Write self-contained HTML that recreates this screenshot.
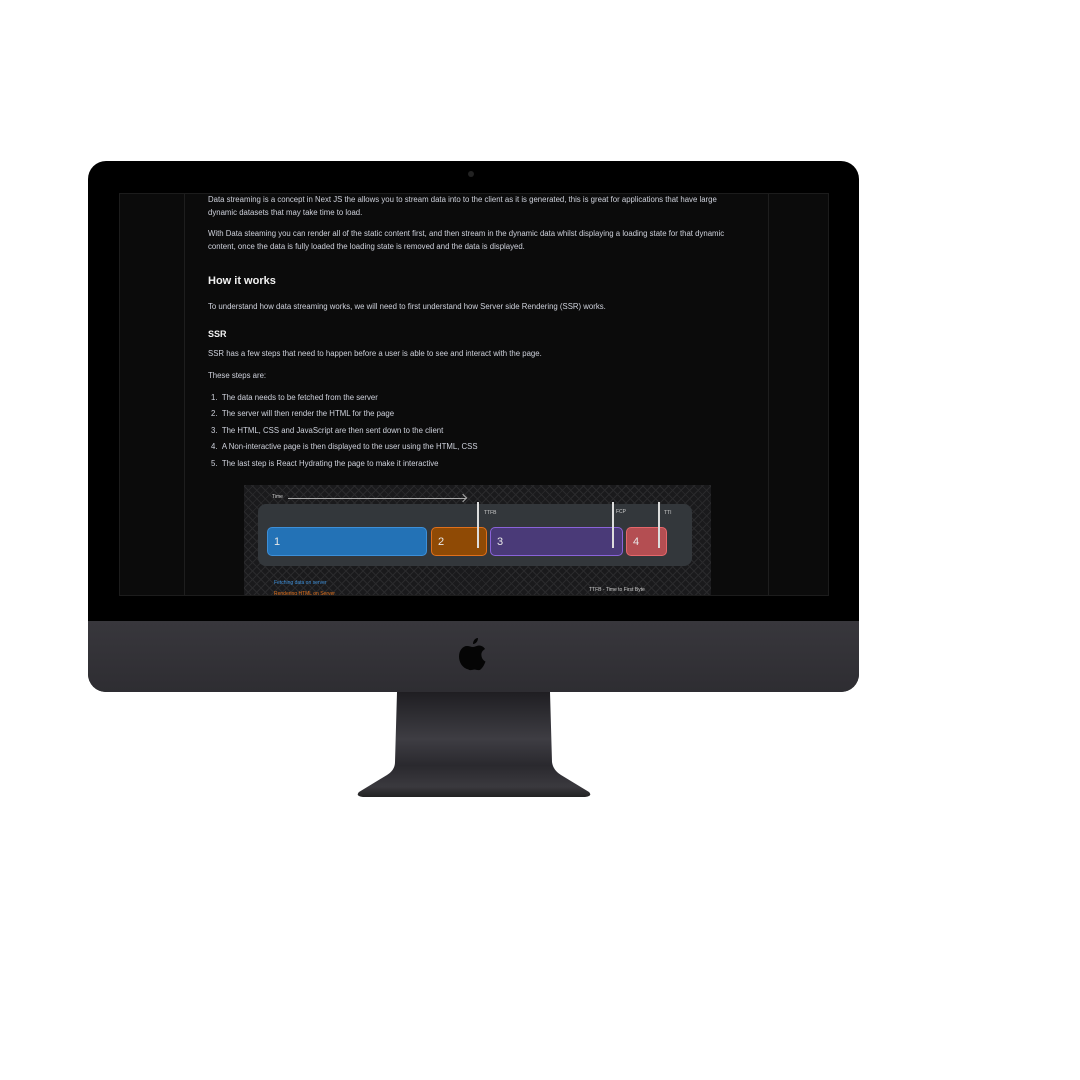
<!DOCTYPE html>
<html><head><meta charset="utf-8"><style>
*{margin:0;padding:0;box-sizing:border-box}
body{width:1080px;height:1080px;background:#fff;position:relative;overflow:hidden;font-family:"Liberation Sans",sans-serif}
.abs{position:absolute}
.mon{left:88px;top:161px;width:771px;height:531px;border-radius:18px;background:#000;overflow:hidden}
.chin{left:0;top:460px;width:771px;height:71px;background:linear-gradient(#38373c,#2e2d32)}
.scr{left:119px;top:193px;width:710px;height:403px;background:#0b0b0b;border:1px solid #1c1c1c;overflow:hidden}
.vl{top:0;width:1px;height:403px;background:#1e1e1e}
.t{position:absolute;left:88px;font-size:7.8px;color:#cfd2dc;line-height:13px;white-space:nowrap}
.h{font-weight:bold;color:#f2f2f2}
.dia{left:124px;top:291px;width:467px;height:112px;background:#1a1a1c;background-image:repeating-linear-gradient(45deg,#2a2a2c 0 1px,transparent 1px 6px),repeating-linear-gradient(-45deg,#2a2a2c 0 1px,transparent 1px 6px)}
.inner{left:14px;top:19px;width:434px;height:62px;background:#33373b;border-radius:8px}
.bar{top:23px;height:29px;border-radius:5px;color:#e8e8e8;font-size:11px;padding:8px 0 0 6px;border:1.5px solid}
.vb{width:2px;background:#ddd;top:-2px;height:46px}
.lbl{font-size:5px;color:#ccc}
</style></head><body>
<div class="abs mon">
 <div class="abs" style="left:380px;top:10px;width:6px;height:6px;border-radius:50%;background:#222"></div>
 <div class="abs chin"></div>
 <svg class="abs" style="left:370px;top:475px" width="30" height="38" viewBox="0 0 30 38"><path fill="#050505" d="M20 2c0 3-2 6-5 6 0-3 2-6 5-6zM15 11c2 0 4-1.5 6-1.5 2.5 0 5 1.5 6 3.5-3 2-4 4-3.5 7 .3 2.5 2 4.5 4 5.5-1 3-3 6.5-5 8-2 1.5-4 0-6 0s-4 1.5-6 0C4 32 1 26 1 20.5 1 14 5 10 9 10c2.5 0 4 1 6 1z"/></svg>
</div>
<div class="abs scr">
 <div class="abs vl" style="left:64px"></div>
 <div class="abs vl" style="left:648px"></div>
 <div class="t" style="top:-1px">Data streaming is a concept in Next JS the allows you to stream data into to the client as it is generated, this is great for applications that have large</div>
 <div class="t" style="top:12px">dynamic datasets that may take time to load.</div>
 <div class="t" style="top:33px">With Data steaming you can render all of the static content first, and then stream in the dynamic data whilst displaying a loading state for that dynamic</div>
 <div class="t" style="top:46px">content, once the data is fully loaded the loading state is removed and the data is displayed.</div>
 <div class="t h" style="top:81px;font-size:11px">How it works</div>
 <div class="t" style="top:106px">To understand how data streaming works, we will need to first understand how Server side Rendering (SSR) works.</div>
 <div class="t h" style="top:134px;font-size:9px">SSR</div>
 <div class="t" style="top:153px">SSR has a few steps that need to happen before a user is able to see and interact with the page.</div>
 <div class="t" style="top:175px">These steps are:</div>
 <div class="t" style="top:197px;left:91px">1.&nbsp;&nbsp;The data needs to be fetched from the server</div>
 <div class="t" style="top:213px;left:91px">2.&nbsp;&nbsp;The server will then render the HTML for the page</div>
 <div class="t" style="top:230px;left:91px">3.&nbsp;&nbsp;The HTML, CSS and JavaScript are then sent down to the client</div>
 <div class="t" style="top:246px;left:91px">4.&nbsp;&nbsp;A Non-interactive page is then displayed to the user using the HTML, CSS</div>
 <div class="t" style="top:263px;left:91px">5.&nbsp;&nbsp;The last step is React Hydrating the page to make it interactive</div>
 <div class="abs dia">
  <div class="abs lbl" style="left:28px;top:9px">Time</div>
  <div class="abs" style="left:44px;top:13px;width:178px;height:1px;background:#aaa"></div>
  <div class="abs" style="left:216px;top:10px;width:6px;height:6px;border-top:1px solid #aaa;border-right:1px solid #aaa;transform:rotate(45deg)"></div>
  <div class="abs inner">
   <div class="abs bar" style="left:9px;width:160px;background:#2372b6;border-color:#3d8fd8">1</div>
   <div class="abs bar" style="left:173px;width:56px;background:#8f4a05;border-color:#e0701b">2</div>
   <div class="abs bar" style="left:232px;width:133px;background:#4a3a78;border-color:#8a63d9">3</div>
   <div class="abs bar" style="left:368px;width:41px;background:#b44e52;border-color:#e6676b">4</div>
   <div class="abs vb" style="left:219px"></div>
   <div class="abs vb" style="left:354px"></div>
   <div class="abs vb" style="left:400px"></div>
   <div class="abs lbl" style="left:226px;top:6px">TTFB</div>
   <div class="abs lbl" style="left:358px;top:5px">FCP</div>
   <div class="abs lbl" style="left:406px;top:6px">TTI</div>
  </div>
  <div class="abs" style="left:30px;top:95px;font-size:5px;color:#3d8fd8">Fetching data on server</div>
  <div class="abs" style="left:30px;top:106px;font-size:5px;color:#e0701b">Rendering HTML on Server</div>
  <div class="abs" style="left:345px;top:102px;font-size:5px;color:#ccc">TTFB - Time to First Byte</div>
 </div>
</div>
<svg class="abs" style="left:355px;top:692px" width="238" height="108" viewBox="0 0 238 108">
 <defs><linearGradient id="g" x1="0" y1="0" x2="0" y2="1"><stop offset="0" stop-color="#1f1e22"/><stop offset=".45" stop-color="#3e3d43"/><stop offset=".7" stop-color="#2a292e"/><stop offset=".9" stop-color="#3a393e"/><stop offset="1" stop-color="#222"/></linearGradient></defs>
 <path d="M42 0H195L197 70Q198 78 206 83L234 100Q238 104 230 105H8Q0 104 4 100L32 83Q40 78 40 70Z" fill="url(#g)"/>
</svg>
</body></html>
